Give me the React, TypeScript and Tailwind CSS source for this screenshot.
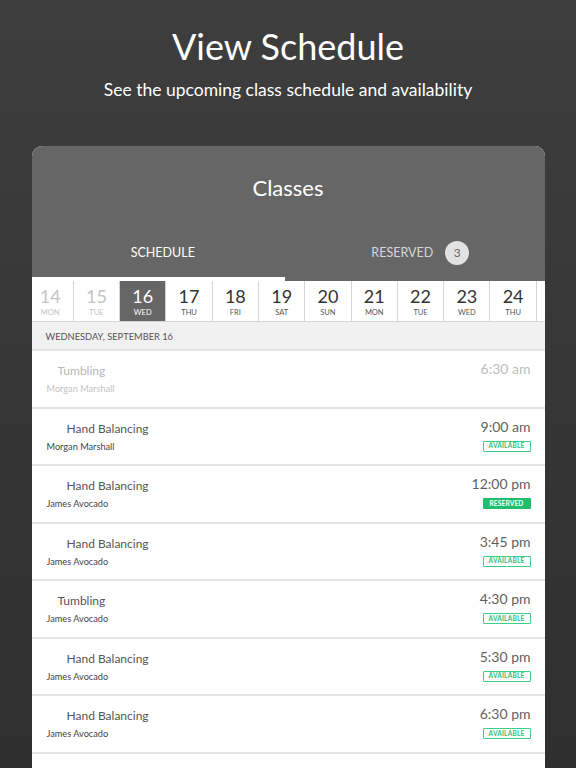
import React from 'react';

interface Day {
    num: string;
    name: string;
    past?: boolean;
    active?: boolean;
}

interface Session {
    title: string;
    indent: string;
    instructor: string;
    time: string;
    status: 'past' | 'available' | 'reserved';
}

const days: Day[] = [
    { num: '14', name: 'MON', past: true },
    { num: '15', name: 'TUE', past: true },
    { num: '16', name: 'WED', active: true },
    { num: '17', name: 'THU' },
    { num: '18', name: 'FRI' },
    { num: '19', name: 'SAT' },
    { num: '20', name: 'SUN' },
    { num: '21', name: 'MON' },
    { num: '22', name: 'TUE' },
    { num: '23', name: 'WED' },
    { num: '24', name: 'THU' },
];

const sessions: Session[] = [
    { title: 'Tumbling', indent: 'pl-[11px]', instructor: 'Morgan Marshall', time: '6:30 am', status: 'past' },
    { title: 'Hand Balancing', indent: 'pl-[20px]', instructor: 'Morgan Marshall', time: '9:00 am', status: 'available' },
    { title: 'Hand Balancing', indent: 'pl-[20px]', instructor: 'James Avocado', time: '12:00 pm', status: 'reserved' },
    { title: 'Hand Balancing', indent: 'pl-[20px]', instructor: 'James Avocado', time: '3:45 pm', status: 'available' },
    { title: 'Tumbling', indent: 'pl-[11px]', instructor: 'James Avocado', time: '4:30 pm', status: 'available' },
    { title: 'Hand Balancing', indent: 'pl-[20px]', instructor: 'James Avocado', time: '5:30 pm', status: 'available' },
    { title: 'Hand Balancing', indent: 'pl-[20px]', instructor: 'James Avocado', time: '6:30 pm', status: 'available' },
];

const DayCell: React.FC<{ day: Day }> = ({ day }) => {
    const cellClass = day.active ? 'bg-[#666666] text-white' : day.past ? 'bg-white text-[#c4c4c4]' : 'bg-white text-[#333333]';
    const labelClass = day.active ? 'text-white' : day.past ? 'text-[#c4c4c4]' : 'text-[#555555]';
    return (
        <div className={`w-[46.3px] shrink-0 h-full border-r border-[#d4d4d4] flex flex-col items-center ${cellClass}`}>
            <span className="text-[18px] leading-[22px] mt-[4px]">{day.num}</span>
            <span className={`text-[7.5px] leading-[10px] mt-[1px] ${labelClass}`}>{day.name}</span>
        </div>
    );
};

const Badge: React.FC<{ status: Session['status'] }> = ({ status }) => {
    if (status === 'past') return null;
    if (status === 'reserved') {
        return (
            <span className="mt-[4px] w-[48px] h-[11px] flex items-center justify-center bg-[#1fbf6e] text-white text-[6.5px] font-bold tracking-[0.2px] rounded-[1px]">
                RESERVED
            </span>
        );
    }
    return (
        <span className="mt-[4px] w-[48px] h-[11px] flex items-center justify-center border border-[#3ccf86] text-[#2cc27a] text-[6.5px] font-bold tracking-[0.2px] rounded-[1px]">
            AVAILABLE
        </span>
    );
};

const SessionRow: React.FC<{ s: Session }> = ({ s }) => {
    const past = s.status === 'past';
    return (
        <div className="h-[57.5px] border-b-2 border-[#e4e4e4] flex justify-between pl-[15px] pr-[14px]">
            <div className="flex flex-col pt-[11px]">
                <span className={`text-[12px] leading-[18px] ${s.indent} ${past ? 'text-[#b8b8b8]' : 'text-[#555555]'}`}>{s.title}</span>
                <span className={`text-[9.2px] leading-[12px] mt-[3px] ${past ? 'text-[#c4c4c4]' : 'text-[#444444]'}`}>{s.instructor}</span>
            </div>
            <div className="flex flex-col items-end pt-[8px]">
                <span className={`text-[14px] leading-[20px] ${past ? 'text-[#bdbdbd]' : 'text-[#5f5f5f]'}`}>{s.time}</span>
                <Badge status={s.status} />
            </div>
        </div>
    );
};

export default function App() {
    return (
        <div
            className="h-[768px] w-[576px] overflow-hidden bg-gradient-to-b from-[#3e3e3e] to-[#2f2f2f] flex flex-col items-center"
            style={{ fontFamily: 'Lato, "Open Sans", sans-serif' }}
        >
            <h1 className="mt-[24px] text-[36px] leading-[44px] text-white font-normal">View Schedule</h1>
            <p className="mt-[11px] text-[17.5px] leading-[22px] text-white">See the upcoming class schedule and availability</p>

            <div className="mt-[45px] w-[513px] flex-1 bg-white rounded-t-[10px] overflow-hidden flex flex-col">
                <div className="bg-[#666666]">
                    <div className="pt-[28px] text-center text-[22px] leading-[28px] text-white">Classes</div>
                    <div className="mt-[27px] h-[48px] flex">
                        <div className="w-1/2 flex items-center justify-center text-[12.5px] text-white pl-[6px]">SCHEDULE</div>
                        <div className="w-1/2 flex items-center justify-center gap-[12px] text-[12.5px] text-[#d6d6d6] pl-[8px]">
                            <span>RESERVED</span>
                            <span className="w-[24px] h-[24px] rounded-full bg-[#e2e2e2] text-[#666666] text-[12px] flex items-center justify-center">3</span>
                        </div>
                    </div>
                    <div className="flex h-[4px]">
                        <div className="w-[253px] bg-white" />
                    </div>
                </div>

                <div className="h-[41px] overflow-hidden border-b border-[#d4d4d4]">
                    <div className="flex h-full -ml-[4px]">
                        {days.map((d) => (
                            <DayCell key={d.num} day={d} />
                        ))}
                        <div className="w-[46.3px] shrink-0 h-full bg-white" />
                    </div>
                </div>

                <div className="h-[29px] bg-[#f1f1f1] border-b-2 border-[#e4e4e4] flex items-center pt-[2px] pl-[14px] text-[9.3px] text-[#555555]">
                    WEDNESDAY, SEPTEMBER 16
                </div>

                {sessions.map((s, i) => (
                    <SessionRow key={i} s={s} />
                ))}
            </div>
        </div>
    );
}
